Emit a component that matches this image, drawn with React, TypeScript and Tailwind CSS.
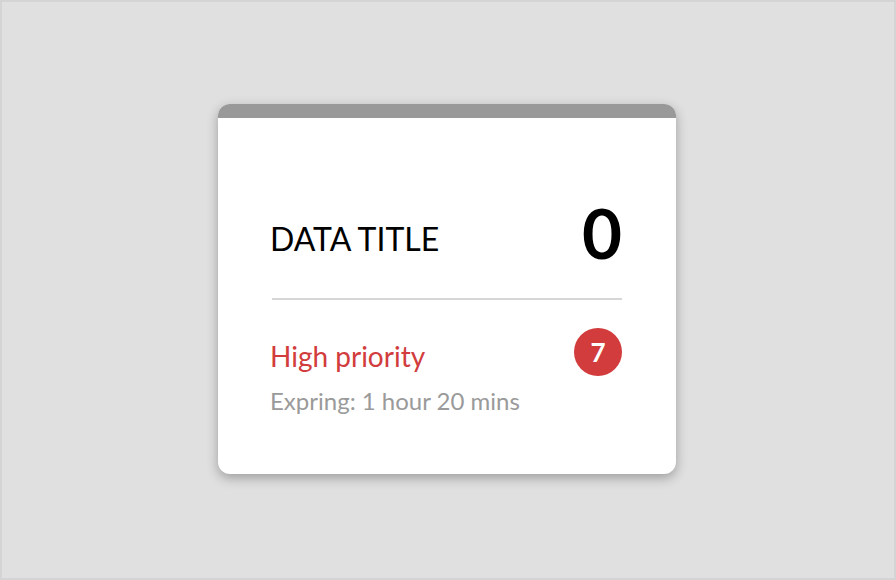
export default function App() {
    return (
        <div className="w-[896px] h-[580px] border-2 border-[#d4d4d4] bg-[#e0e0e0] flex items-center justify-center font-['Lato',sans-serif]">
            <div className="w-[458px] h-[370px] -mt-[2px] -ml-[2px] bg-white rounded-[12px] overflow-hidden shadow-[0_4px_12px_rgba(0,0,0,0.3)] flex flex-col">
                <div className="h-[14px] bg-[#999999]" />
                <div className="pl-[52px] pr-[54px] pt-[80px] flex flex-col">
                    <div className="flex justify-between items-end">
                        <span className="text-[32px] leading-[38px] text-black mb-[9px]">DATA TITLE</span>
                        <span className="text-[69px] leading-[69px] font-bold text-black">0</span>
                    </div>
                    <div className="mt-[31px] ml-[2px] h-[2px] bg-[#d6d6d6]" />
                    <div className="mt-[28px] flex justify-between items-end">
                        <span className="text-[28px] leading-[34px] text-[#d23c3c] mb-[3px]">High priority</span>
                        <span className="w-[48px] h-[48px] rounded-full bg-[#d23c3c] text-white text-[26px] font-bold flex items-center justify-center">
                            7
                        </span>
                    </div>
                    <div className="mt-[10px] text-[24px] leading-[30px] text-[#9a9a9a]">Expring: 1 hour 20 mins</div>
                </div>
            </div>
        </div>
    );
}
